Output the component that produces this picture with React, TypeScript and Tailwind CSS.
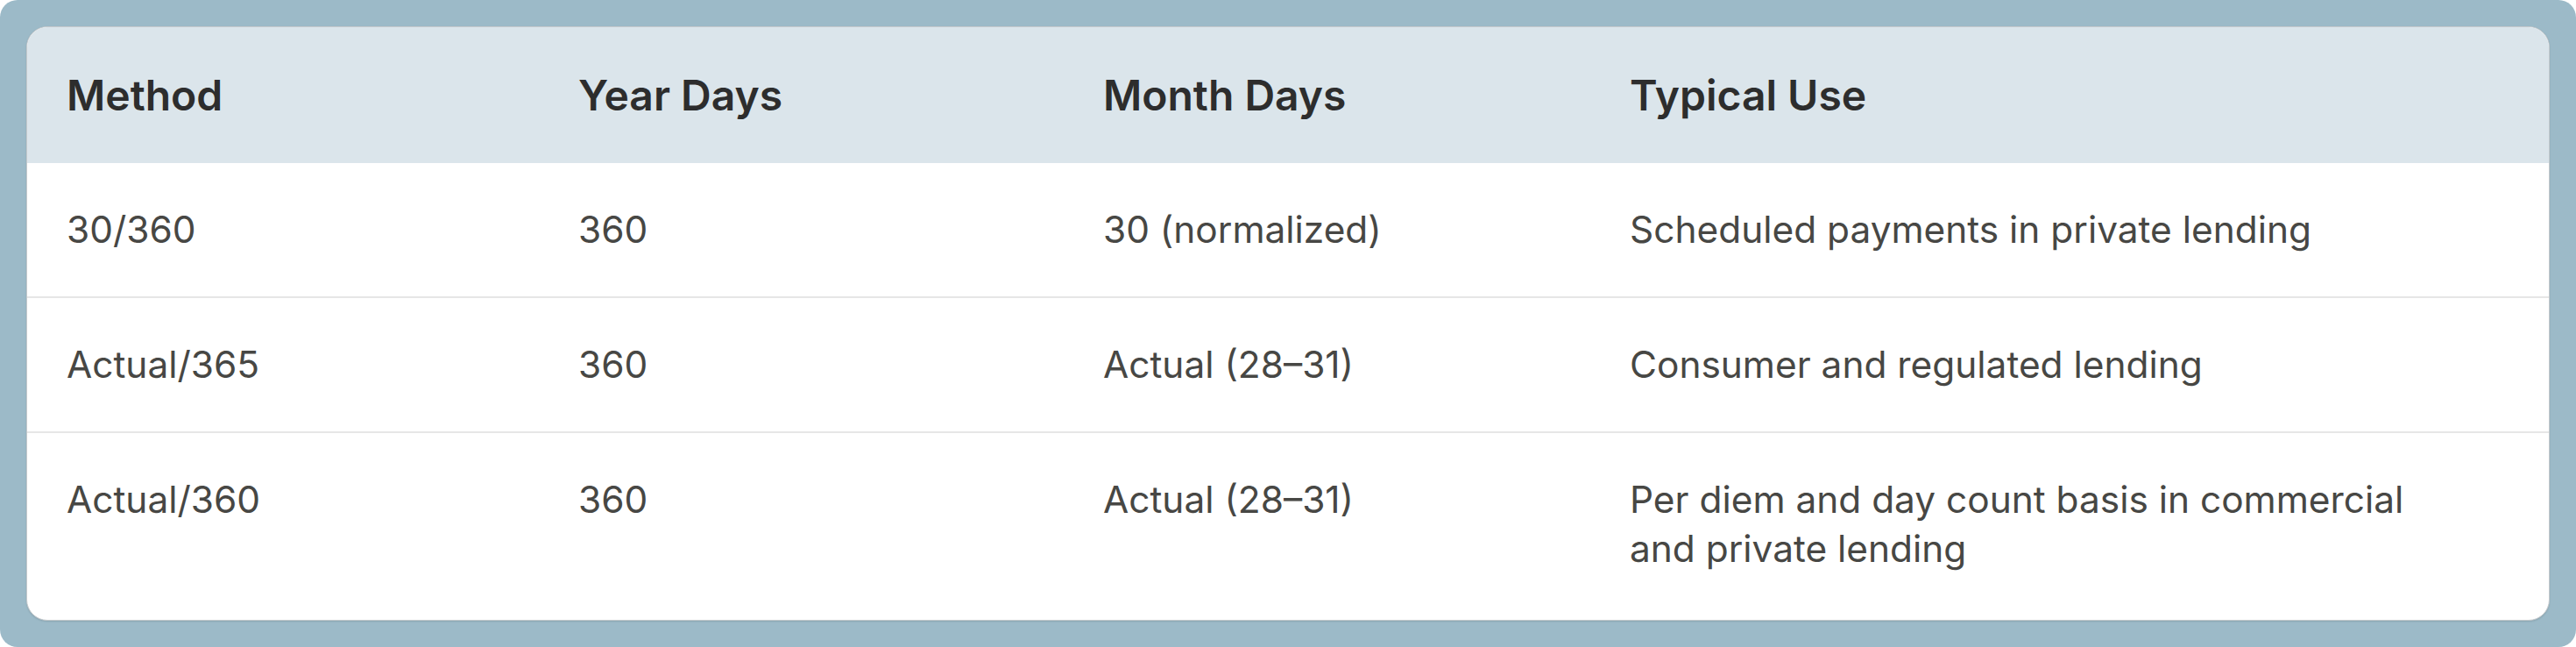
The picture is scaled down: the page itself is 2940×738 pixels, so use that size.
const headers = ["Method", "Year Days", "Month Days", "Typical Use"];

const rows = [
  ["30/360", "360", "30 (normalized)", "Scheduled payments in private lending"],
  ["Actual/365", "360", "Actual (28–31)", "Consumer and regulated lending"],
  ["Actual/360", "360", "Actual (28–31)", "Per diem and day count basis in commercial and private lending"],
];

// fixed column tracks measured off the reference
const cols = "grid grid-cols-[584px_599px_601px_1fr]";

export default function App() {
  return (
    <div className="flex h-screen w-full flex-col rounded-[20px] bg-[#9cbac8] p-[30px] font-['Inter','Noto_Sans',sans-serif]">
      <div className="flex flex-1 flex-col overflow-hidden rounded-[24px] border border-[#c4c9cc] bg-white shadow-[0_1px_2px_rgba(0,0,0,0.12)]">
        <div className={`${cols} h-[155px] shrink-0 items-center bg-[#dbe5eb]`}>
          {headers.map((h) => (
            <div key={h} className="px-[45px] text-[48px] font-semibold leading-[64px] text-[#2d2d2d]">
              {h}
            </div>
          ))}
        </div>
        {rows.map((row, i) => (
          <div
            key={row[0]}
            className={`${cols} ${i < rows.length - 1 ? "border-b-2 border-[#e6e6e6]" : "flex-1"}`}
          >
            {row.map((cell, j) => (
              <div key={j} className="px-[45px] py-[48px] text-[42.4px] leading-[56px] text-[#474744]">
                {j === 3 ? <p className="max-w-[925px]">{cell}</p> : cell}
              </div>
            ))}
          </div>
        ))}
      </div>
    </div>
  );
}
